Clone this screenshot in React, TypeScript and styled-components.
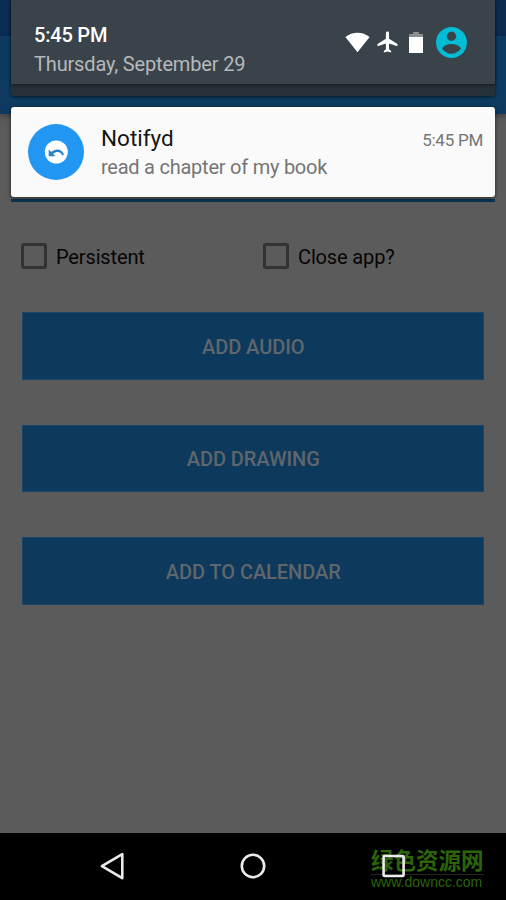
import React from "react";
import styled, { createGlobalStyle } from "styled-components";

const GlobalStyle = createGlobalStyle`
  * { box-sizing: border-box; }
  body { margin: 0; background: #5b5b5b; }
`;

const Screen = styled.div`
  position: relative;
  display: flex;
  flex-direction: column;
  width: 506px;
  height: 900px;
  overflow: hidden;
  background: #5b5b5b;
  font-family: Roboto, "Liberation Sans", sans-serif;
`;

const StatusStrip = styled.div`
  height: 36px;
  flex: none;
  background: #0b2d52;
`;

const AppBar = styled.header`
  height: 78px;
  flex: none;
  background: #0d3a5e;
  box-shadow: 0 2px 6px rgba(0, 0, 0, 0.35);
`;

const Content = styled.main`
  flex: 1;
  display: flex;
  flex-direction: column;
`;

const TextField = styled.div`
  height: 88px;
  flex: none;
  margin: 0 11px;
  border-bottom: 3px solid #0b3352;
`;

const Options = styled.div`
  display: grid;
  grid-template-columns: 242px 1fr;
  margin-top: 41px;
  padding-left: 21px;
`;

const Option = styled.label`
  display: flex;
  align-items: center;
  gap: 9px;
  height: 26px;
  color: #050505;
  font-size: 20px;
  letter-spacing: -0.14px;
  line-height: 26px;
`;

const OptionText = styled.span`
  padding-top: 1px;
  white-space: nowrap;
`;

const CheckBox = styled.span`
  width: 26px;
  height: 26px;
  border: 3px solid #323232;
  border-radius: 3px;
`;

const Actions = styled.div`
  display: flex;
  flex-direction: column;
  gap: 45px;
  padding: 43px 22.5px 0 22px;
`;

const ActionButton = styled.button`
  height: 67.5px;
  padding: 2px 0 0 1px;
  border: 1px solid #1c446a;
  background: #0d395d;
  color: #5f666c;
  font: 500 20px/24px Roboto, "Liberation Sans", sans-serif;
  letter-spacing: -0.06px;
`;

const NavBar = styled.nav`
  position: relative;
  display: flex;
  justify-content: space-between;
  align-items: center;
  height: 67px;
  flex: none;
  padding: 0 98px 1px;
  background: #000;
`;

const Shade = styled.div`
  position: absolute;
  top: 0;
  left: 11px;
  width: 484px;
`;

const ShadeHeader = styled.section`
  height: 96px;
  border-radius: 0 0 3px 3px;
  background: #263238;
  box-shadow: 0 1px 3px rgba(0, 0, 0, 0.55);
`;

const HeaderPanel = styled.div`
  display: flex;
  justify-content: space-between;
  height: 84px;
  padding: 21px 28px 0 23px;
  background: #3b434a;
  box-shadow: 0 1px 3px rgba(0, 0, 0, 0.5);
`;

const Clock = styled.div`
  color: #fff;
  font-size: 20px;
  font-weight: 500;
  letter-spacing: -0.2px;
  line-height: 28px;
`;

const DateText = styled.div`
  margin-top: 1px;
  color: #b5b9bb;
  font-size: 20px;
  letter-spacing: -0.16px;
  line-height: 28px;
`;

const StatusIcons = styled.div`
  display: flex;
  align-items: center;
  height: 42px;
`;

const Notification = styled.article`
  display: flex;
  height: 90px;
  margin-top: 11px;
  padding: 17px 12px 0 17px;
  border-radius: 3px;
  background: #fafafa;
  box-shadow: 0 1px 4px rgba(0, 0, 0, 0.6);
`;

const NotificationText = styled.div`
  flex: 1;
  margin-left: 17px;
`;

const TitleRow = styled.div`
  display: flex;
  justify-content: space-between;
  align-items: center;
  height: 28px;
`;

const Title = styled.span`
  color: #151515;
  font-size: 22.5px;
  line-height: 28px;
`;

const Time = styled.span`
  padding-top: 3px;
  color: #757575;
  font-size: 17px;
  letter-spacing: -0.25px;
`;

const Message = styled.div`
  margin-top: 1px;
  color: #757575;
  font-size: 20px;
  letter-spacing: -0.24px;
  line-height: 28px;
`;

const Watermark = styled.div`
  position: absolute;
  left: 371px;
  top: 13px;
  width: 113px;
  color: #2b6409;
  white-space: nowrap;
`;

const WatermarkName = styled.div`
  height: 29px;
  border-bottom: 1px solid #252525;
  font: 700 22.5px/27px "Noto Sans CJK SC", sans-serif;
`;

const WatermarkUrl = styled.div`
  font: 14px/15px "Liberation Sans", sans-serif;
`;

const WifiIcon = styled.svg`
  width: 25px;
  height: 21px;
`;
const PlaneIcon = styled.svg`
  width: 22px;
  height: 22px;
  margin-left: 7px;
`;
const BatteryIcon = styled.svg`
  width: 14px;
  height: 21px;
  margin-left: 10px;
`;
const AvatarIcon = styled.svg`
  width: 31px;
  height: 31px;
  margin-left: 13px;
`;
const AppIcon = styled.svg`
  flex: none;
  width: 56px;
  height: 56px;
`;
const NavIcon = styled.svg`
  z-index: 1;
  width: 28px;
  height: 28px;
  fill: none;
  stroke: #ebebeb;
  stroke-width: 2.6;
  stroke-linejoin: round;
`;

export default function App() {
  return (
    <>
      <GlobalStyle />
      <Screen>
        <StatusStrip />
        <AppBar />
        <Content>
          <TextField />
          <Options>
            <Option><CheckBox /><OptionText>Persistent</OptionText></Option>
            <Option><CheckBox /><OptionText>Close app?</OptionText></Option>
          </Options>
          <Actions>
            <ActionButton>ADD AUDIO</ActionButton>
            <ActionButton>ADD DRAWING</ActionButton>
            <ActionButton>ADD TO CALENDAR</ActionButton>
          </Actions>
        </Content>
        <NavBar>
          <NavIcon viewBox="0 0 28 28"><path d="M24.3 2.2v24L3.9 14.2z" /></NavIcon>
          <NavIcon viewBox="0 0 28 28"><circle cx="14" cy="14" r="11.2" /></NavIcon>
          <NavIcon viewBox="0 0 28 28"><rect x="3.6" y="4" width="20" height="20" rx="1" /></NavIcon>
          <Watermark>
            <WatermarkName>绿色资源网</WatermarkName>
            <WatermarkUrl>www.downcc.com</WatermarkUrl>
          </Watermark>
        </NavBar>
        <Shade>
          <ShadeHeader>
            <HeaderPanel>
              <div>
                <Clock>5:45 PM</Clock>
                <DateText>Thursday, September 29</DateText>
              </div>
              <StatusIcons>
                <WifiIcon viewBox="0 0 25 21"><path fill="#fff" d="M.4 5Q5.8.7 12.5.7T24.6 5L12.5 20.3z" /></WifiIcon>
                <PlaneIcon viewBox="2 1.5 20 21"><path fill="#fff" d="M21 16v-2l-8-5V3.500c0-.83-.67-1.500-1.500-1.500S10 2.670 10 3.500V9l-8 5v2l8-2.500V19l-2 1.500V22l3.500-1 3.500 1v-1.500L13 19v-5.500z" /></PlaneIcon>
                <BatteryIcon viewBox="0 0 14 21"><path fill="#8a8e90" d="M4 0h6v2h4v3H0V2h4z" /><path fill="#fff" d="M0 5h14v16H0z" /></BatteryIcon>
                <AvatarIcon viewBox="2 2 20 20"><path fill="#00bcd4" d="M12 2C6.480 2 2 6.480 2 12s4.480 10 10 10 10-4.480 10-10S17.520 2 12 2zm0 3c1.660 0 3 1.340 3 3s-1.340 3-3 3-3-1.340-3-3 1.340-3 3-3zm0 14.200c-2.500 0-4.710-1.280-6-3.220.03-1.990 4-3.080 6-3.080 1.990 0 5.970 1.090 6 3.080-1.290 1.940-3.500 3.220-6 3.220z" /></AvatarIcon>
              </StatusIcons>
            </HeaderPanel>
          </ShadeHeader>
          <Notification>
            <AppIcon viewBox="0 0 56 56">
              <circle cx="28" cy="28" r="28" fill="#2196f3" />
              <circle cx="28.300" cy="28" r="11.500" fill="#fff" />
              <path fill="#2583cd" d="M20.700 25.500v6.800h6.800l-2.400-2.400c3.700-3 7.700-2.300 9.100 1.600l1.800-.8c-1.900-5.600-8.100-6.900-12.800-2.600z" />
            </AppIcon>
            <NotificationText>
              <TitleRow><Title>Notifyd</Title><Time>5:45 PM</Time></TitleRow>
              <Message>read a chapter of my book</Message>
            </NotificationText>
          </Notification>
        </Shade>
      </Screen>
    </>
  );
}
